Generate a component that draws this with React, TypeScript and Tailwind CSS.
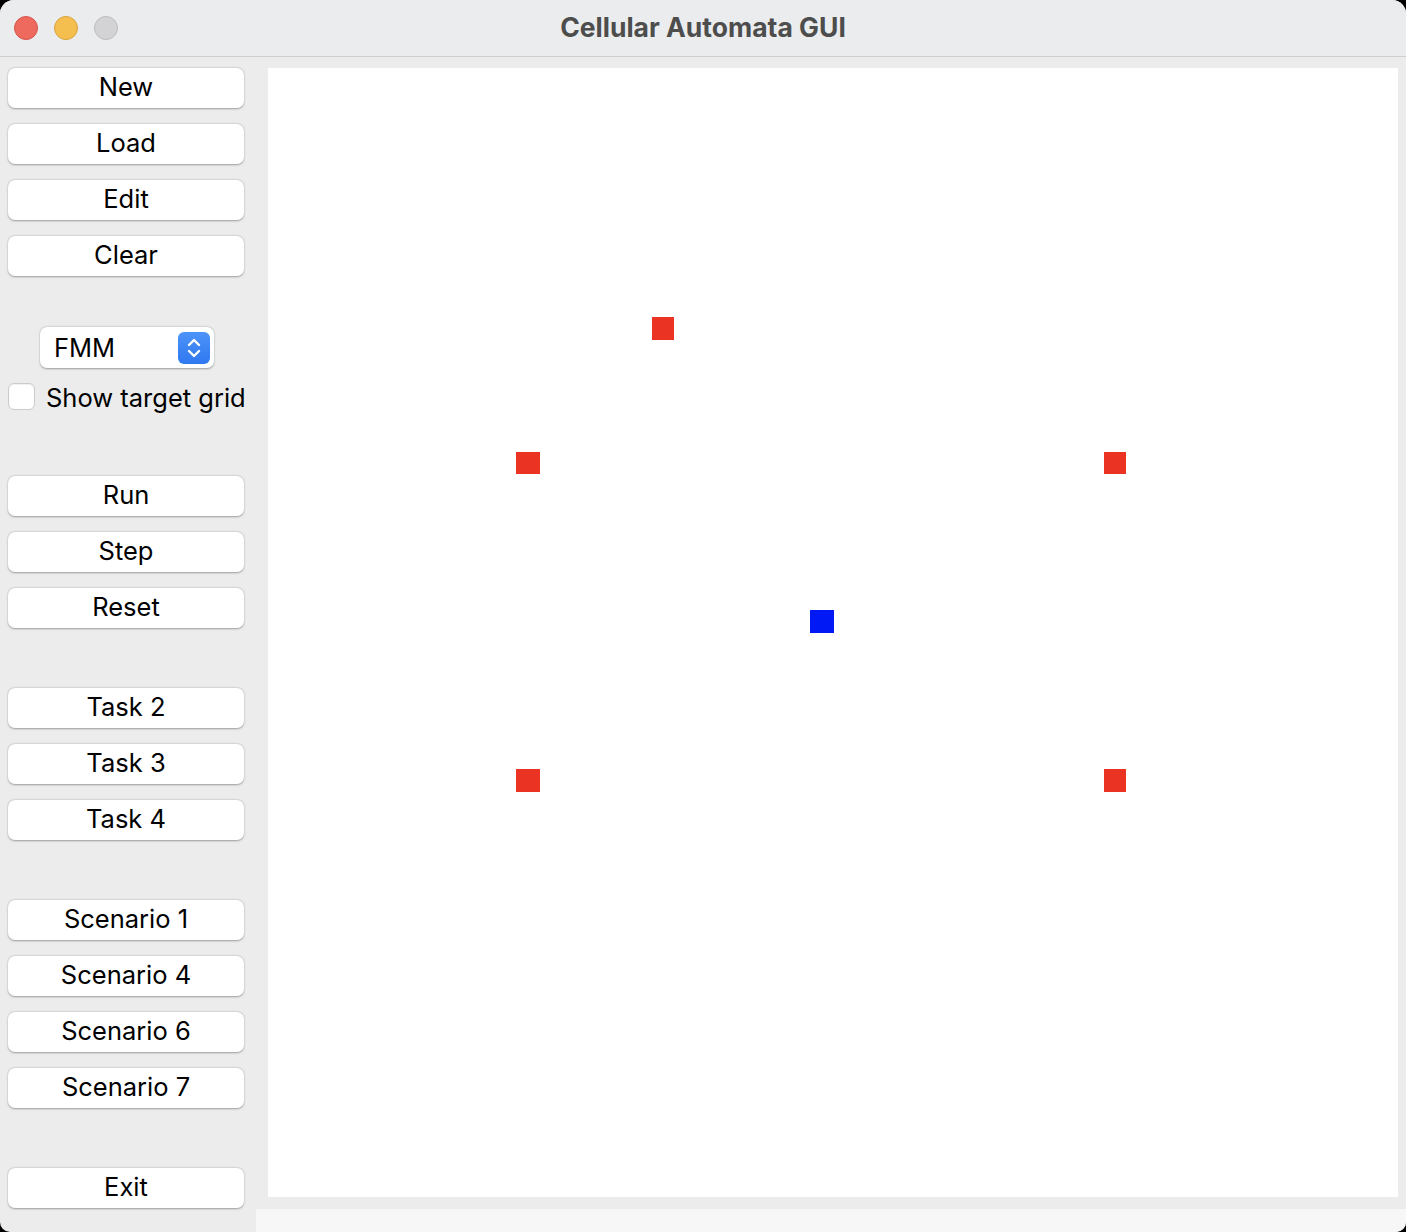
import React from "react";

const groups: string[][] = [
  ["New", "Load", "Edit", "Clear"],
  ["Run", "Step", "Reset"],
  ["Task 2", "Task 3", "Task 4"],
  ["Scenario 1", "Scenario 4", "Scenario 6", "Scenario 7"],
];

const cells = [
  { x: 384, y: 249, w: 22, h: 23, c: "bg-[#ea3323]" },
  { x: 248, y: 384, w: 24, h: 22, c: "bg-[#ea3323]" },
  { x: 836, y: 384, w: 22, h: 22, c: "bg-[#ea3323]" },
  { x: 542, y: 542, w: 24, h: 23, c: "bg-[#0019f5]" },
  { x: 248, y: 701, w: 24, h: 23, c: "bg-[#ea3323]" },
  { x: 836, y: 701, w: 22, h: 23, c: "bg-[#ea3323]" },
];

function MacButton({ label }: { label: string }) {
  return (
    <button className="h-[40px] w-[236px] shrink-0 rounded-[7px] bg-white text-[25.5px] leading-none text-black shadow-[0_0.5px_2px_rgba(0,0,0,0.35)] flex items-center justify-center">
      <span className="-mt-[2px]">{label}</span>
    </button>
  );
}

export default function App() {
  return (
    <div className="w-[1406px] h-[1232px] bg-black overflow-hidden" style={{ fontFamily: "Inter, 'Liberation Sans', sans-serif" }}>
      <div className="w-full h-full rounded-t-[14px] rounded-b-[10px] bg-[#ececec] flex flex-col overflow-hidden">
        <div className="relative h-[57px] shrink-0 bg-[#ebecee] border-b border-[#cfcfcf] flex items-center justify-center">
          <div className="absolute left-[14px] top-[16px] flex gap-[16px]">
            <span className="w-[24px] h-[24px] rounded-full bg-[#ee6a5f] border border-[#d5544a]" />
            <span className="w-[24px] h-[24px] rounded-full bg-[#f5bf4f] border border-[#d9a33c]" />
            <span className="w-[24px] h-[24px] rounded-full bg-[#d3d3d5] border border-[#bcbcbe]" />
          </div>
          <span className="text-[26.5px] font-bold text-[#4d4d4d] -mt-[1px]">Cellular Automata GUI</span>
        </div>

        <div className="flex flex-1 min-h-0">
          <div className="w-[256px] shrink-0 pl-[8px] pt-[11px] flex flex-col">
            <div className="flex flex-col gap-[16px]">
              {groups[0].map((l) => <MacButton key={l} label={l} />)}
            </div>

            <div className="mt-[51px] ml-[32px] w-[174px] h-[41px] rounded-[7px] bg-white shadow-[0_0.5px_2px_rgba(0,0,0,0.35)] flex items-center justify-between pl-[14px] pr-[4px]">
              <span className="text-[25.5px] text-black leading-none mt-[1px]">FMM</span>
              <span className="w-[32px] h-[32px] rounded-[6px] bg-gradient-to-b from-[#4c93f8] to-[#2f78f0] flex items-center justify-center">
                <svg width="18" height="24" viewBox="0 0 18 24" fill="none" stroke="white" strokeWidth="2.4" strokeLinecap="round" strokeLinejoin="round">
                  <path d="M4 9 L9 4 L14 9" />
                  <path d="M4 15 L9 20 L14 15" />
                </svg>
              </span>
            </div>

            <div className="mt-[15px] h-[27px] flex items-center gap-[11px]">
              <span className="w-[27px] h-[27px] rounded-[6px] bg-white border border-[#cbcbcb] shadow-[inset_0_0.5px_1px_rgba(0,0,0,0.1)]" />
              <span className="text-[25.5px] text-black leading-none mt-[2px]">Show target grid</span>
            </div>

            <div className="mt-[66px] flex flex-col gap-[16px]">
              {groups[1].map((l) => <MacButton key={l} label={l} />)}
            </div>
            <div className="mt-[60px] flex flex-col gap-[16px]">
              {groups[2].map((l) => <MacButton key={l} label={l} />)}
            </div>
            <div className="mt-[60px] flex flex-col gap-[16px]">
              {groups[3].map((l) => <MacButton key={l} label={l} />)}
            </div>
            <div className="mt-[60px]">
              <MacButton label="Exit" />
            </div>
          </div>

          <div className="flex-1 flex flex-col">
            <div className="relative mt-[11px] ml-[12px] mr-[8px] h-[1129px] bg-white">
              {cells.map((c, i) => (
                <span
                  key={i}
                  className={`absolute ${c.c}`}
                  style={{ left: c.x, top: c.y, width: c.w, height: c.h }}
                />
              ))}
            </div>
            <div className="mt-[12px] flex-1 bg-[#f7f7f7]" />
          </div>
        </div>
      </div>
    </div>
  );
}
